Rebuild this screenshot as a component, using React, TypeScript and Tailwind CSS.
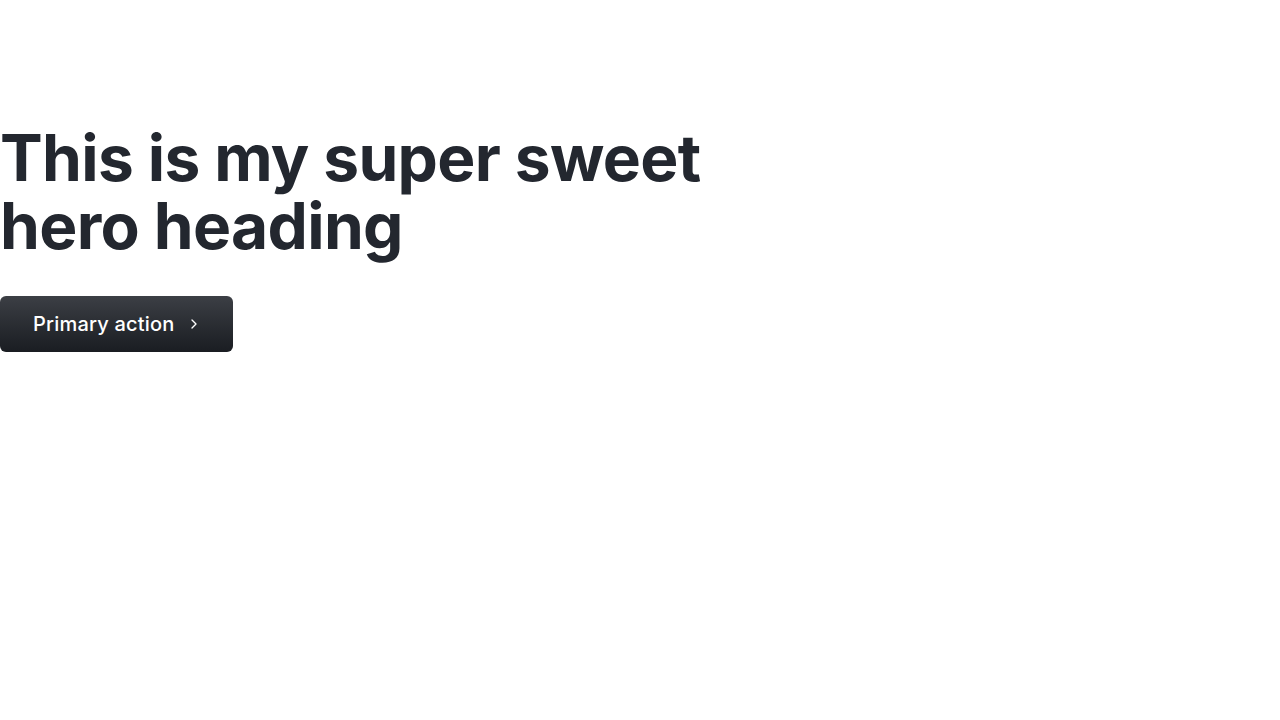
import { ChevronRight } from 'lucide-react';

export default function App() {
  return (
    <div className="min-h-screen w-full bg-white font-['Inter',sans-serif]">
      <section className="pt-[124px]">
        <h1 className="text-[64px] font-bold leading-[68px] tracking-[-0.01em] text-[#23272f]">
          This is my super sweet
          <br />
          hero heading
        </h1>
        <div className="mt-[36px]">
          <button className="flex h-[56px] w-[233px] items-center rounded-md bg-gradient-to-b from-[#3c3f45] to-[#1a1d22] pl-[33px] text-[20px] font-medium tracking-[0.01em] text-white">
            Primary action
            <ChevronRight className="ml-[11px] h-4 w-4" strokeWidth={2} />
          </button>
        </div>
      </section>
    </div>
  );
}
